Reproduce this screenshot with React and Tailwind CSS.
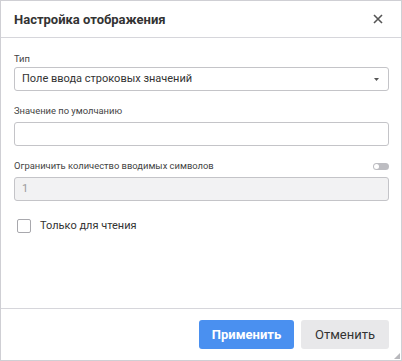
import React, { useState } from "react";

function App() {
  const [readOnly, setReadOnly] = useState(false);
  const [limit, setLimit] = useState(false);

  return (
    <div
      className="relative w-[402px] h-[361px] bg-white border border-[#cfcfd4] flex flex-col text-[#333]"
      style={{ fontFamily: "Roboto, 'Liberation Sans', sans-serif" }}
    >
      <div className="h-[37px] border-b border-[#d6d6db] flex items-center justify-between pl-[13px] pr-[17px]">
        <h2 className="text-[13px] font-bold text-[#333] leading-none">Настройка отображения</h2>
        <button className="w-[12px] h-[12px] flex items-center justify-center" aria-label="Закрыть">
          <svg width="10" height="10" viewBox="0 0 10 10">
            <path d="M1 1 L9 9 M9 1 L1 9" stroke="#555" strokeWidth="1.6" />
          </svg>
        </button>
      </div>

      <div className="flex-1 pl-[13px] pr-[12px] pt-[14px]">
        <label className="block text-[9.4px] leading-[14px] text-[#444]">Тип</label>
        <div className="mt-[1px] h-[24px] border border-[#c4c4c8] rounded-[3px] flex items-center justify-between pl-[7px] pr-[9px]">
          <span className="text-[11px] text-[#333]">Поле ввода строковых значений</span>
          <svg width="5" height="3" viewBox="0 0 5 3">
            <path d="M0 0 L5 0 L2.5 3 Z" fill="#555" />
          </svg>
        </div>

        <label className="block mt-[13px] text-[9.4px] leading-[14px] text-[#444]">Значение по умолчанию</label>
        <input
          type="text"
          className="mt-[4px] w-full h-[24px] border border-[#c4c4c8] rounded-[3px] px-[7px] text-[11px] outline-none"
        />

        <div className="mt-[13px] flex items-center justify-between">
          <span className="text-[9.4px] leading-[14px] text-[#444]">Ограничить количество вводимых символов</span>
          <button
            onClick={() => setLimit(!limit)}
            className="w-[16px] h-[7px] rounded-full bg-[#bdbdc2] flex items-center px-[1px]"
          >
            <span className="w-[5px] h-[5px] rounded-full bg-white" />
          </button>
        </div>
        <div className="mt-[4px] h-[24px] border border-[#c4c4c8] rounded-[3px] bg-[#f2f2f3] flex items-center px-[7px]">
          <span className="text-[11px] text-[#9a9a9a]">1</span>
        </div>

        <label className="mt-[17px] flex items-center gap-[9px] pl-[3px] cursor-pointer">
          <span
            onClick={() => setReadOnly(!readOnly)}
            className="w-[14px] h-[14px] border border-[#a8a8ad] rounded-[2px] bg-white"
          />
          <span className="text-[11px] text-[#333]">Только для чтения</span>
        </label>
      </div>

      <div className="border-t border-[#d6d6db] flex justify-end gap-[7px] pt-[11px] pb-[11px] pr-[12px]">
        <button className="w-[95px] h-[29px] rounded-[3px] bg-[#4a90f0] text-white text-[13px] font-bold">
          Применить
        </button>
        <button className="w-[88px] h-[29px] rounded-[3px] bg-[#e8e8ea] text-[#333] text-[13px]">
          Отменить
        </button>
      </div>

      <svg className="absolute right-[1px] bottom-[1px]" width="6" height="6" viewBox="0 0 6 6">
        <path d="M6 0 L6 6 L0 6 Z" fill="#b8b8bc" />
      </svg>
    </div>
  );
}

export default App;
